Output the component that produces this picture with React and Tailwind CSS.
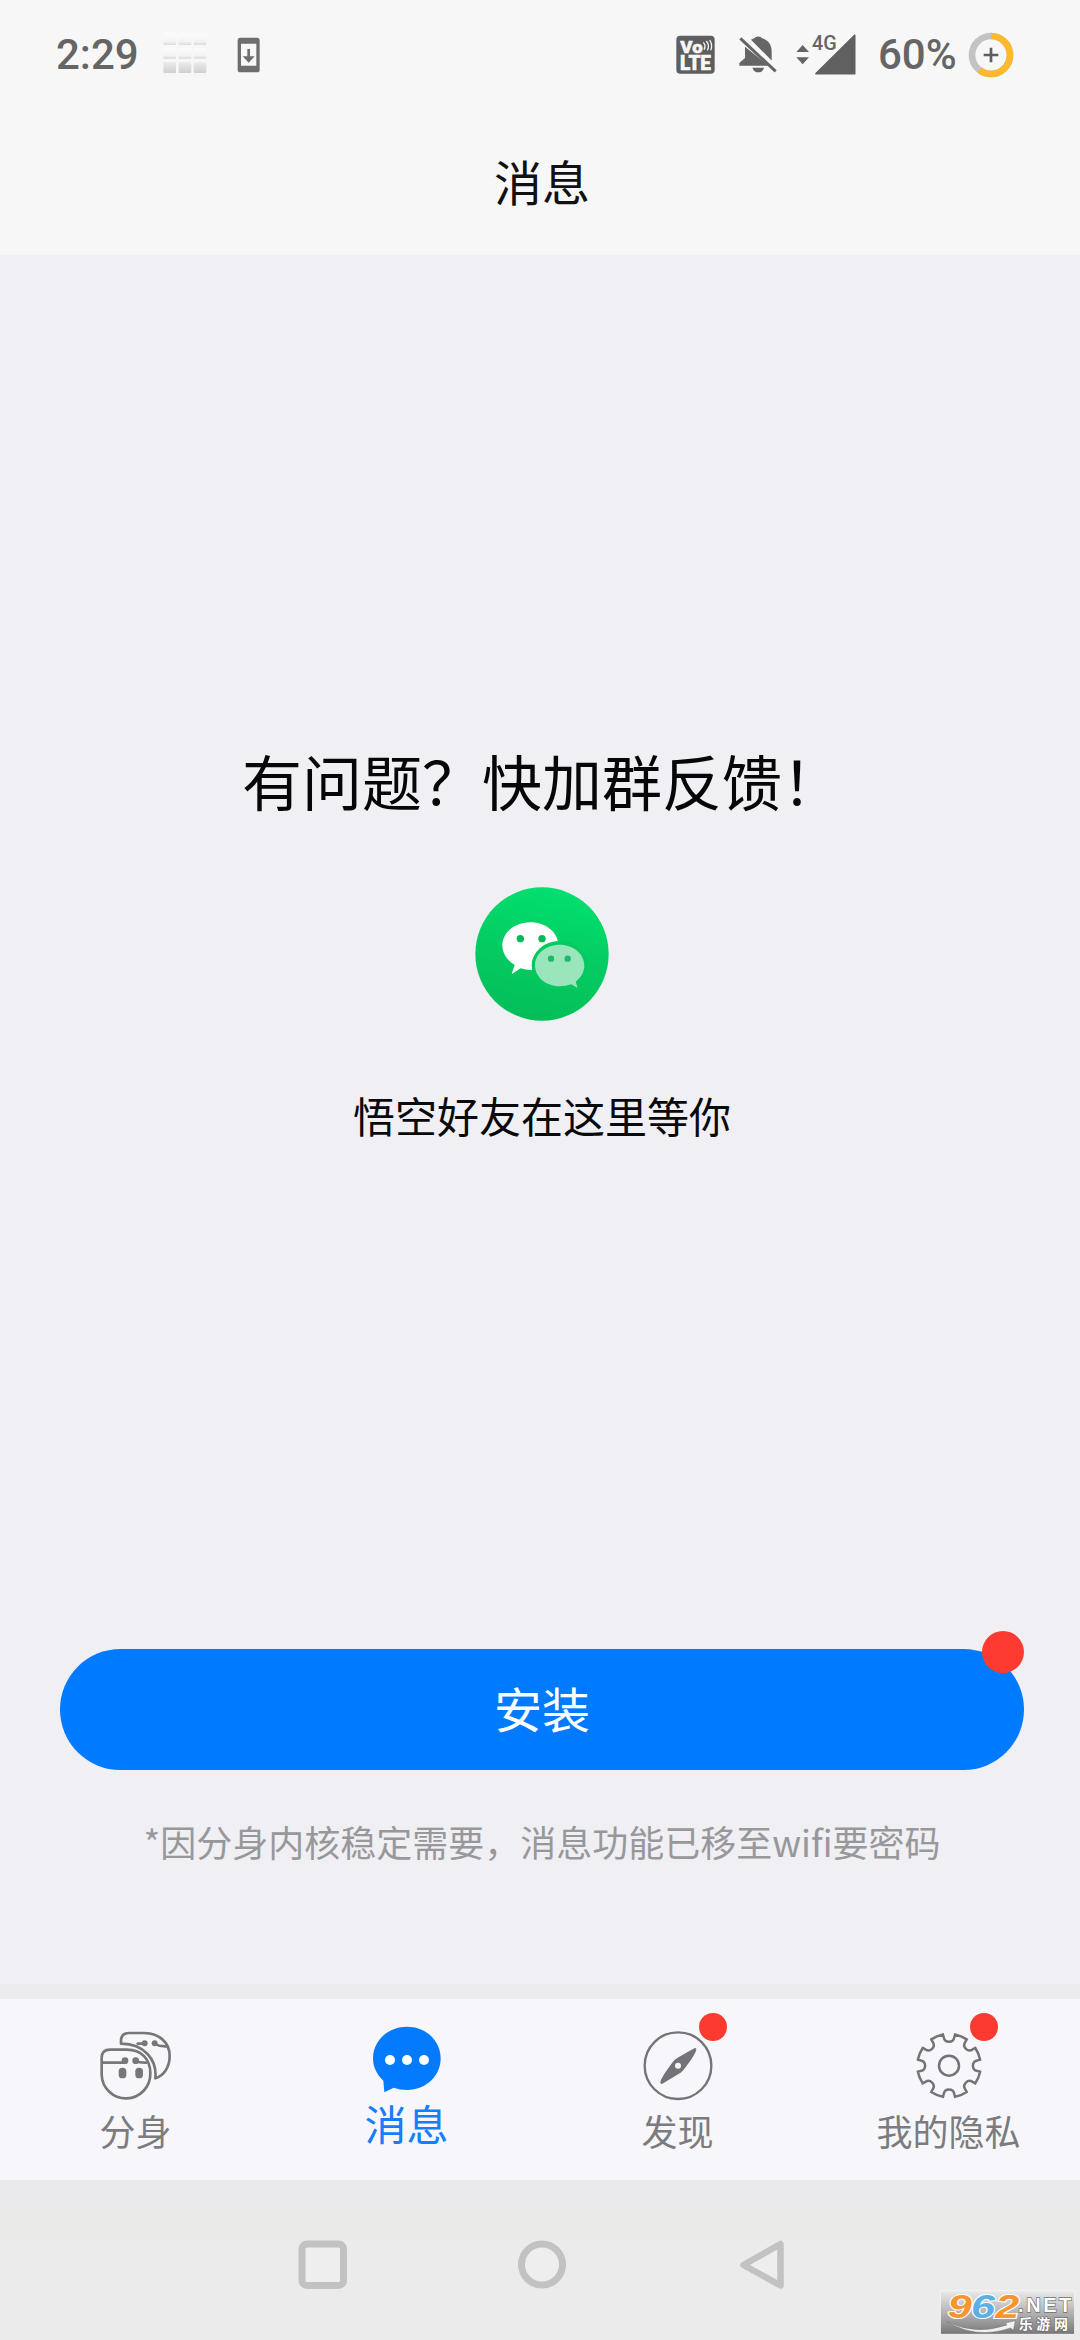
function StatusBar() {
  return (
    <div className="flex h-[108px] w-full items-center justify-between pl-[56px] pr-[66px] pt-px font-[Roboto,sans-serif] text-[42px] font-medium leading-none text-[#656565]">
      <div className="flex items-center">
        <span className="w-[98px] whitespace-nowrap pt-px text-[42px]">2:29</span>
        <svg className="mr-[23px] h-[60px] w-[60px]" viewBox="0 0 180 180">
          <defs>
            <linearGradient id="tile" x1="0" y1="0" x2="0" y2="1">
              <stop offset="0" stopColor="#fbfbfb" />
              <stop offset="0.7" stopColor="#f4f4f4" />
              <stop offset="1" stopColor="#dadada" />
            </linearGradient>
            <linearGradient id="tileDark" x1="0" y1="0" x2="0" y2="1">
              <stop offset="0" stopColor="#ececec" />
              <stop offset="1" stopColor="#cfcfcf" />
            </linearGradient>
          </defs>
          {[28, 74, 119].map((x) => (
            <g key={x}>
              <rect x={x} y="24" width="38" height="36" rx="3" fill="url(#tile)" />
              <rect x={x} y="68" width="38" height="33" rx="3" fill="url(#tile)" />
              <rect x={x} y="111" width="38" height="33" rx="3" fill="url(#tileDark)" />
            </g>
          ))}
        </svg>
        <svg className="h-[36px] w-[24px]" viewBox="0 0 72 108">
          <path fillRule="evenodd" fill="#6e6e6e" d="M10 2h50q8 0 8 8v88q0 8-8 8H10q-8 0-8-8V10q0-8 8-8zM12 20v66h46V20z" />
          <path fill="#6e6e6e" d="M31 36h8v22h14L35 77 17 58h14z" />
        </svg>
      </div>
      <div className="flex items-center">
        <svg className="mr-[24px] h-[39px] w-[39px]" viewBox="0 0 117 117">
          <rect x="1" y="2" width="115" height="114" rx="12" fill="#5e5e5e" />
          <g fontFamily="Roboto, sans-serif" fontWeight="900" fill="#f7f7f7" stroke="#f7f7f7" strokeWidth="1.500">
            <text x="13" y="53" fontSize="51" textLength="67" lengthAdjust="spacingAndGlyphs">Vo</text>
            <text x="12" y="105" fontSize="58" textLength="93" lengthAdjust="spacingAndGlyphs">LTE</text>
          </g>
          <path d="M82 22q9 10 2 22M91 18q11 13 3 28M101 15q10 16 3 31" fill="none" stroke="#f7f7f7" strokeWidth="4" />
        </svg>
        <svg className="mr-[19px] h-[37px] w-[38px]" viewBox="0 0 114 111">
          <path fill="#656565" d="M36 11Q43 8 46 7a12 8 0 0 1 23 0C89 12 98 28 98 46v28zM18 32l71 57H1v-8l17-15zM40 95h35q-4 14-17 14T40 95z" />
          <path d="M4 7l106 99" stroke="#656565" strokeWidth="9" />
          <path d="M14 1l102 96" stroke="#f7f7f7" strokeWidth="8" />
        </svg>
        <svg className="mr-[22px] h-[42px] w-[60px] overflow-visible" viewBox="0 0 180 126">
          <path fill="#656565" d="M1 54l19-21 19 21zM1 70h38L20 91z" />
          <path fill="#606060" stroke="#606060" strokeWidth="5" strokeLinejoin="round" d="M60 119L176 4v115z" />
          <path stroke="#f7f7f7" strokeWidth="14" d="M96 67l38-38" />
          <text x="48" y="47" fontFamily="Roboto, sans-serif" fontWeight="500" fontSize="58" fill="#656565" textLength="74" lengthAdjust="spacingAndGlyphs">4G</text>
        </svg>
        <span className="w-[90px] whitespace-nowrap pt-px text-[42px]">60%</span>
        <svg className="h-[46px] w-[46px]" viewBox="0 0 138 138">
          <circle cx="69" cy="69" r="57" fill="none" stroke="#c3c3c3" strokeWidth="20" />
          <circle cx="69" cy="69" r="57" fill="none" stroke="#fdb92c" strokeWidth="20" pathLength="100" strokeDasharray="60 40" transform="rotate(-90 69 69)" />
          <path d="M69 47v44M47 69h44" stroke="#5e5e5e" strokeWidth="8" />
        </svg>
      </div>
    </div>
  );
}

function WechatLogo() {
  return (
    <svg className="h-[134px] w-[134px]" viewBox="105 82 402 402">
      <defs>
        <linearGradient id="green" x1="0.6" y1="0" x2="0.4" y2="1">
          <stop offset="0" stopColor="#02e070" />
          <stop offset="0.5" stopColor="#04cc62" />
          <stop offset="1" stopColor="#04be58" />
        </linearGradient>
      </defs>
      <circle cx="306" cy="283" r="200" fill="url(#green)" />
      <path fill="#fff" d="M271 188c46 0 84 30 84 69s-38 75-84 74q-14 0-29-5l-27 17 9-27c-22-13-37-35-37-59 0-39 38-69 84-69z" />
      <circle cx="241" cy="237" r="11" fill="#08b75a" />
      <circle cx="306" cy="237" r="11" fill="#08b75a" />
      <ellipse cx="359" cy="317" rx="84" ry="73" fill="#05c85f" />
      <path fill="#9be5bd" d="M359 255c41 0 74 28 74 62 0 20-10 37-26 49l6 19-19-11q-17 6-35 6c-41 0-74-28-74-63s33-62 74-62z" />
      <circle cx="333" cy="297" r="9.500" fill="#1fb968" />
      <circle cx="383" cy="297" r="9.500" fill="#1fb968" />
    </svg>
  );
}

function CloneIcon() {
  return (
    <svg className="h-[80px] w-[80px]" viewBox="137 129 240 240" fill="none" stroke="#77777a" strokeWidth="8" strokeLinecap="round" strokeLinejoin="round">
      <path d="M154 234q0-25 25-25h50c46 0 71 30 71 71a73 73 0 0 1-146 4z" />
      <path d="M212 191v-8q0-24 24-24h44c46 0 78 28 78 69 0 34-18 59-43 67 6-54-32-104-103-104z" />
      <path d="M158 248h64M252 242q17 7 36 6M262 191h16M311 191q17 9 37 8" />
      <g fill="#77777a" stroke="none">
        <circle cx="224" cy="242" r="10" />
        <circle cx="256" cy="242" r="10" />
        <circle cx="283" cy="190" r="9" />
        <circle cx="313" cy="190" r="9" />
        <rect x="205" y="263" width="23" height="32" rx="11" />
        <rect x="255" y="263" width="23" height="32" rx="11" />
      </g>
    </svg>
  );
}

function ChatIcon() {
  return (
    <svg className="h-[80px] w-[80px]" viewBox="949 129 240 240">
      <path fill="#047bfe" d="M1069 140c57 0 101 42 101 95s-44 95-101 95q-21 0-40-7l-28 14-3-35c-19-17-31-41-31-67 0-53 45-95 102-95z" />
      <g fill="#fff">
        <circle cx="1018" cy="240" r="15" />
        <circle cx="1069" cy="240" r="15" />
        <circle cx="1120" cy="240" r="15" />
      </g>
    </svg>
  );
}

function CompassIcon() {
  return (
    <svg className="h-[80px] w-[80px]" viewBox="112 129 240 240">
      <circle cx="232" cy="257" r="100" fill="none" stroke="#747478" strokeWidth="7" />
      <path fill="#747478" stroke="#747478" strokeWidth="8" strokeLinejoin="round" d="M283 208q-3 16-39 61-6 7-15 11l-46 28q-1-10 36-59 6-8 15-13z" />
      <circle cx="232" cy="257" r="9" fill="#f7f7fb" />
    </svg>
  );
}

function GearIcon() {
  const at = (deg, r) => {
    const a = (deg * Math.PI) / 180;
    return `${(1045 + r * Math.sin(a)).toFixed(1)} ${(257 - r * Math.cos(a)).toFixed(1)}`;
  };
  const d =
    `M${at(-11, 95)}` +
    [0, 45, 90, 135, 180, 225, 270, 315]
      .map((k) => `L${at(k - 10.5, 86)}A16 16 0 0 0 ${at(k + 10.5, 86)}L${at(k + 11, 95)}A95 95 0 0 1 ${at(k + 34, 95)}`)
      .join("") +
    "Z";
  return (
    <svg className="h-[80px] w-[80px]" viewBox="925 129 240 240" fill="none" stroke="#747478" strokeWidth="7.500">
      <path d={d} />
      <circle cx="1045" cy="257" r="30" />
    </svg>
  );
}

function Tab({ icon, label, active, badge }) {
  return (
    <div className="flex flex-col items-center pt-[24px]">
      <div className="relative h-[80px] w-[80px]">
        {icon}
        {badge && <span className="absolute -top-[10px] left-[61px] size-[28px] rounded-full bg-[#fd3a30]" />}
      </div>
      {active ? (
        <span className="mt-[-4px] text-[42px] leading-[48px] text-[#157efb]">{label}</span>
      ) : (
        <span className="mt-[3px] text-[36px] leading-[48px] text-[#7c7c7e]">{label}</span>
      )}
    </div>
  );
}

function SystemNav() {
  return (
    <div className="flex h-[160px] flex-col bg-[#ebebeb]">
      <div className="h-[28px] bg-[#eaeaec]" />
      <div className="h-[32px] bg-[#eaeae8]" />
      <div className="flex pl-[298px]">
        <svg className="mr-[169px] h-[50px] w-[50px]" viewBox="0 0 50 50">
          <rect x="4" y="4" width="41.500" height="41.500" rx="5" fill="#eee" stroke="#c2c2c2" strokeWidth="7" />
        </svg>
        <svg className="mr-[172px] h-[50px] w-[50px]" viewBox="0 0 50 50">
          <circle cx="25" cy="24.500" r="20.500" fill="#eee" stroke="#c2c2c2" strokeWidth="7" />
        </svg>
        <svg className="h-[50px] w-[50px]" viewBox="0 0 50 50">
          <path d="M4.500 25L41.500 4v41.500z" fill="#eee" stroke="#c2c2c2" strokeWidth="6.500" strokeLinejoin="round" />
        </svg>
      </div>
    </div>
  );
}

function SiteBadge() {
  return (
    <svg className="absolute bottom-[5px] right-[5px] h-[45px] w-[135px] overflow-visible" viewBox="0 0 405 135">
      <defs>
        <linearGradient id="plate" x1="0" y1="0" x2="0" y2="1">
          <stop offset="0" stopColor="#ececec" />
          <stop offset="0.5" stopColor="#b4b4b4" />
          <stop offset="1" stopColor="#777777" />
        </linearGradient>
      </defs>
      <rect x="1" y="1" width="403" height="132" fill="url(#plate)" stroke="#f4f4f4" strokeWidth="3" />
      <g fontFamily="'Liberation Sans', sans-serif" fontWeight="bold" fontStyle="italic" fontSize="100" stroke="#fff" strokeWidth="6" paintOrder="stroke">
        <text x="23" y="84" fill="#f7962f" textLength="72" lengthAdjust="spacingAndGlyphs">9</text>
        <text x="93" y="84" fill="#5bb0e8" textLength="72" lengthAdjust="spacingAndGlyphs">6</text>
        <text x="166" y="84" fill="#f7962f" textLength="72" lengthAdjust="spacingAndGlyphs">2</text>
      </g>
      <path fill="#f2f2f2" stroke="#777" strokeWidth="1.500" d="M20 94q84 44 181 11l-5-6 30-7-6 29-8-7Q106 149 20 94z" />
      <g fill="#fff" stroke="#6f6f6f" strokeWidth="4" paintOrder="stroke" fontWeight="bold">
        <text x="234" y="67" fontFamily="'Liberation Sans', sans-serif" fontSize="60" textLength="160" lengthAdjust="spacing">.NET</text>
        <text x="236" y="117" fontFamily="'Noto Sans CJK SC', sans-serif" fontSize="42" textLength="148" lengthAdjust="spacing">乐游网</text>
      </g>
    </svg>
  );
}

export default function App() {
  return (
    <div className={`relative flex h-[2340px] w-[1080px] flex-col overflow-hidden bg-[#efeff4] font-["Noto_Sans_CJK_SC",sans-serif] text-black`}>
      <header className="flex h-[255px] flex-col bg-[#f7f7f7]">
        <StatusBar />
        <h1 className="mt-[40px] pl-[4px] text-center text-[48px] leading-[64px] text-[#111]">消息</h1>
      </header>

      <main className="flex h-[1729px] flex-col items-center pl-[4px]">
        <h2 className="mt-[485px] whitespace-nowrap text-[60px] leading-[80px] text-[#060608]">有问题？快加群反馈！</h2>
        <div className="mt-[67px]">
          <WechatLogo />
        </div>
        <p className="mt-[66px] text-[42px] leading-[56px] text-[#0a0a0c]">悟空好友在这里等你</p>
        <button className="relative mt-[506px] flex h-[121px] w-[964px] items-center justify-center rounded-full bg-[#007aff] pb-[6px] text-[48px] leading-[64px] text-white">
          安装
          <span className="absolute -top-[18px] right-0 size-[42px] rounded-full bg-[#fe3b30]" />
        </button>
        <p className="mt-[47px] whitespace-nowrap text-[36px] leading-[48px] text-[#98989b]">*因分身内核稳定需要，消息功能已移至wifi要密码</p>
      </main>

      <div className="h-[15px] bg-[#ececee]" />
      <nav className="grid h-[181px] w-[1084px] grid-cols-4 bg-[#f7f7fb]">
        <Tab icon={<CloneIcon />} label="分身" />
        <Tab icon={<ChatIcon />} label="消息" active />
        <Tab icon={<CompassIcon />} label="发现" badge />
        <Tab icon={<GearIcon />} label="我的隐私" badge />
      </nav>
      <SystemNav />
      <SiteBadge />
    </div>
  );
}
